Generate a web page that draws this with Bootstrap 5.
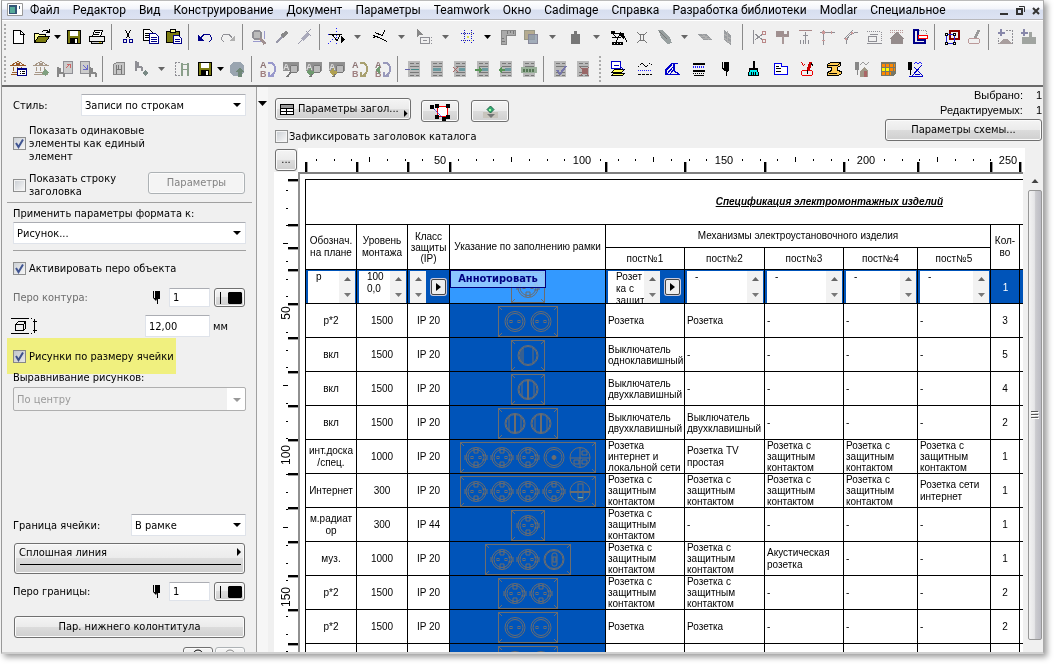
<!DOCTYPE html>
<html lang="ru">
<head>
<meta charset="utf-8">
<meta name="viewport" content="width=device-width, initial-scale=1">
<title>Каталог</title>
<link href="https://cdn.jsdelivr.net/npm/bootstrap@5.3.0/dist/css/bootstrap.min.css" rel="stylesheet">
<style>
:root{--face:#f0f0f0;--ui:"DejaVu Sans Condensed","DejaVu Sans",sans-serif;--sheet:"Liberation Sans",Arial,sans-serif;--blue:#0054b9}
body{background:#fff;font:11px/13px var(--ui);color:#000;height:100vh;overflow:hidden;padding:0 12px 10px 1px}
.app-window{height:100%;background:var(--face);border-top:1px solid #bbb;border-left:1px solid #999;border-right:1px solid #aaa;border-bottom:2px solid #d0d0d0;box-shadow:3px 3px 6px #0006;overflow:hidden}
.menu-strip{height:19px;background:linear-gradient(#fff,#f2f4fa 45%,#d7deef 50%,#dde3f3);border-bottom:1px solid #b8b8bc;gap:13px;padding-left:5px;font:12px/18px Roboto,sans-serif}
.menu-strip a{color:#000;text-decoration:none;white-space:nowrap}
.menu-strip .wbtn{border:0;background:none;padding:0;width:12px;height:12px}
.menu-strip svg,.tools svg{display:block}
.app-icon{margin-right:-7px}
.tools{border-top:1px solid #fff;border-bottom:2px solid #696969;height:67px;overflow:hidden}
.tool-row{height:32px;padding-left:1px}
.tool-row button{border:0;background:none;padding:0;flex:none;display:flex;align-items:center;justify-content:center;height:26px}
.tb{width:23px}.tbw{width:27px}.da{width:9px}.db{width:17px}.dc{width:21px}
.vsep{width:8px;height:26px;flex:none;background:linear-gradient(#8a8a8a,#8a8a8a) 3px 0/1px 100% no-repeat}
.grip{width:4px;height:26px;flex:none;background:repeating-linear-gradient(#aaa 0 2px,transparent 2px 4px) 1px 0/2px 100% no-repeat}
.grip.wide{width:10px;background-position:5px 0}
.side{width:255px;flex:none;padding:7px 10px 0 11px;border-right:1px solid #a0a0a0;overflow:hidden}
.side .win-check + label{margin-left:3px}
.strip{width:11px;flex:none;background:#f6f6f6;padding:14px 1px 0}
.win-select,.win-input{border:1px solid #dfe3ea;border-top-color:#abadb3;border-radius:1px;background-color:#fff;font:inherit;color:#000;height:22px;padding:0 3px}
.win-select{appearance:none;background-image:url("data:image/svg+xml,%3Csvg xmlns='http://www.w3.org/2000/svg' width='8' height='4'%3E%3Cpath d='M0 0h8L4 4z'/%3E%3C/svg%3E");background-repeat:no-repeat;background-position:right 4px center}
.win-select:disabled{height:24px;background-color:#f0f0f0;border:1px solid #afafaf;border-radius:2px;color:#9a9a9a;opacity:1;background-image:url("data:image/svg+xml,%3Csvg xmlns='http://www.w3.org/2000/svg' width='18' height='22'%3E%3Cpath fill='%23fff' d='M0 0h18v22H0z'/%3E%3Cpath fill='%23999' d='M6 10h8l-4 4z'/%3E%3C/svg%3E");background-position:right 0 center}
.win-input{height:19px}
.win-btn{border:1px solid #707070;border-radius:3px;background:linear-gradient(#f4f4f4,#ebebeb 49%,#dcdcdc 50%,#cfcfcf);box-shadow:inset 0 0 0 1px #fbfbfb;font:inherit;color:#000;height:22px;padding:0 8px;line-height:18px;white-space:nowrap}
.win-btn:disabled{border-color:#adb2b5;background:#f4f4f4;color:#838383}
.side .win-btn{margin-right:1px}
.pen-btn{width:31px;height:19px;padding:0;display:flex;align-items:center;justify-content:center}
.win-check{appearance:none;width:13px;height:13px;flex:none;margin:0;border:1px solid #8e8f8f;background:linear-gradient(135deg,#cdd1d6,#f6f6f6) center/9px 9px no-repeat #f4f4f4}
.win-check:checked{background:url("data:image/svg+xml,%3Csvg xmlns='http://www.w3.org/2000/svg' width='11' height='11'%3E%3Cpath fill='none' stroke='%23405592' stroke-width='2' d='M2 5l2.500 4L9 1.500'/%3E%3C/svg%3E") center no-repeat,linear-gradient(135deg,#cdd1d6,#f6f6f6)}
.rule{height:1px;background:#a0a0a0}
.hl{background:#ffff87;mix-blend-mode:multiply;margin:1px 0 0 -6px;height:36px;width:169px;padding-left:6px;position:relative;white-space:nowrap}
.main-pane{min-width:0}
.top-tools{height:61px;padding:0 1px 0 7px}
.counts{font:11px/15px var(--sheet);text-align:right;padding-top:1px}
.ruler-row{height:24px}
.corner{width:30px;padding:1px 0 0 7px}
.corner .win-btn{width:22px;padding:0}
.hr-ruler{background:#fff;overflow:hidden;min-width:0}
.v-ruler{width:24px;margin-left:6px;background:#fff;flex:none;overflow:hidden}
.v-ruler svg,.hr-ruler svg{display:block;font:12px var(--sheet)}
.sheet-box{border-top:2px solid #808080;border-left:2px solid #909090;background:#fff;padding:5px 0 0 5px;overflow:hidden;min-width:0}
.sbar{width:16px;flex:none;margin-left:4px;padding:6px 1px 12px;overflow:hidden}
.thumb{border:1px solid #979797;border-radius:2px;background:linear-gradient(90deg,#f3f3f3,#e6e6e8 45%,#cbcbcf 55%,#bcbcc4);width:14px}
.spec{width:100%;table-layout:fixed;border-collapse:separate;border-spacing:0;font:10px/11px var(--sheet)}
.spec th,.spec td{border-top:1px solid #000;border-left:1px solid #000;padding:0;font-weight:400;vertical-align:middle;overflow:hidden}
.spec tbody td{height:34px;padding-left:2px;white-space:nowrap}
.spec tbody .ctr{text-align:center;padding:0}
.spec .loose,.spec thead th{line-height:12px}
.spec .pic{background:var(--blue);padding:0!important;text-align:center}
.spec .pic svg{display:block;margin:2px auto 0}
.spec .edit td{background:var(--blue);padding:1px 1px 0 2px;height:34px}
.spec .edit .pic{background:#39f;overflow:visible;position:relative}
.spec .edit .last{color:#fff;text-align:center}
.cell-edit{height:32px}
.cell-edit textarea{flex:1 1 0;min-width:0;height:32px;border:0;resize:none;padding:0 0 0 8px;font:10px/12px var(--sheet);overflow:hidden;white-space:pre;background:#fff}
.spin{width:16px;height:32px;flex:none;background:#f2f2f2;display:flex;flex-direction:column;justify-content:space-around;align-items:center}
.go{width:15px;height:16px;padding:0;margin:0 3px 0 5px;flex:none;border:1px solid #444;border-radius:2px;background:#eee;box-shadow:0 0 0 1px #ccd;display:flex;align-items:center;justify-content:center}
.anno{position:absolute;left:0;top:0;width:96px;height:18px;border:1px solid #000080;background:#99ccffdd;color:#000080;font:bold 11px/16px var(--ui);text-align:center}
.doc-title{height:45px;font-weight:700!important;font-style:italic;text-decoration:underline;text-align:right;padding-right:80px!important}
</style>
</head>
<body>
<div class="app-window d-flex flex-column">
<nav class="menu-strip d-flex align-items-center flex-shrink-0">
<svg class="app-icon" width="17" height="14"><path fill="#fff" stroke="#999" d="M.5.5h15v12H.5z"/><path fill="#357" d="M2 2h8v9H2z"/><path fill="#5a9" d="M3 4h5v6H3z"/><path fill="#357" d="M12 3h1v3h-1z"/></svg>
<a href="#">Файл</a><a href="#">Редактор</a><a href="#">Вид</a><a href="#">Конструирование</a><a href="#">Документ</a><a href="#">Параметры</a><a href="#">Teamwork</a><a href="#">Окно</a><a href="#">Cadimage</a><a href="#">Справка</a><a href="#">Разработка библиотеки</a><a href="#">Modlar</a><a href="#">Специальное</a>
<span class="ms-auto d-flex gap-1">
<button class="wbtn" aria-label="Свернуть"><svg width="12" height="12"><path fill="#333" d="M1 9h8v2H1z"/></svg></button>
<button class="wbtn" aria-label="Восстановить"><svg width="12" height="12"><path fill="none" stroke="#333" stroke-width="2" d="M2 5h5v5H2z"/><path fill="none" stroke="#333" d="M4 2.500h5.500V8"/></svg></button>
<button class="wbtn" aria-label="Закрыть"><svg width="12" height="12"><path fill="none" stroke="#333" stroke-width="2" d="M2 4l6 6M8 4l-6 6"/></svg></button></span>
</nav>
<div class="tools flex-shrink-0">
<div class="tool-row d-flex align-items-center" id="row1"></div>
<div class="tool-row d-flex align-items-center" id="row2"></div>
</div>
<div class="d-flex flex-grow-1" style="min-height:0">
<aside class="side d-flex flex-column">
 <div class="d-flex align-items-center flex-shrink-0"><label for="st">Стиль:</label><select id="st" class="win-select ms-auto" style="width:165px"><option>Записи по строкам</option></select></div>
 <div class="d-flex align-items-center mt-2 flex-shrink-0"><input type="checkbox" class="win-check" id="c1" checked><label for="c1">Показать одинаковые<br>элементы как единый<br>элемент</label></div>
 <div class="d-flex align-items-center flex-shrink-0" style="margin-top:9px"><input type="checkbox" class="win-check" id="c2"><label for="c2">Показать строку<br>заголовка</label><button class="win-btn ms-auto align-self-start" style="width:97px" disabled>Параметры</button></div>
 <div class="rule mt-1 flex-shrink-0" style="margin-left:-6px;margin-right:-6px"></div>
 <label for="fmt" class="mt-1">Применить параметры формата к:</label>
 <select id="fmt" class="win-select flex-shrink-0" style="margin-top:2px"><option>Рисунок...</option></select>
 <div class="rule flex-shrink-0" style="margin-top:6px"></div>
 <div class="d-flex align-items-center flex-shrink-0" style="margin-top:11px"><input type="checkbox" class="win-check" id="c3" checked><label for="c3">Активировать перо объекта</label></div>
 <div class="d-flex align-items-center flex-shrink-0" style="margin-top:13px"><label for="p1" style="color:#6d6d6d">Перо контура:</label><svg class="ms-auto me-2" width="8" height="14"><use href="#pen"/></svg><input id="p1" class="win-input" style="width:41px" value="1"><button class="win-btn pen-btn ms-1" aria-label="Перо"><svg width="25" height="13"><use href="#penprev"/></svg></button></div>
 <div class="d-flex align-items-center flex-shrink-0 mt-2"><svg width="28" height="18" style="margin-left:-2px"><g fill="none" stroke="#000" shape-rendering="crispEdges"><path d="M0 1.500h17M0 16.500h17M4.500 7.500h8v6h-8zM7.500 4.500h7v6M12.500 13.500l2-2"/><path d="M4.500 7.500l3-3M12.500 7.500l2-3"/><path stroke-dasharray="1 2" d="M17 1.500h6M17 16.500h6"/><path d="M23.500 2v14M21.500 4.500h4M21.500 13.500h4"/></g></svg><input id="h1" aria-label="Высота" class="win-input ms-auto" style="width:65px;height:22px" value="12,00"><label for="h1" style="width:36px;padding-left:3px">мм</label></div>
 <div class="hl d-flex align-items-center flex-shrink-0"><input type="checkbox" class="win-check" id="c4" checked><label for="c4">Рисунки по размеру ячейки</label></div>
 <label for="al" style="margin-top:-3px">Выравнивание рисунков:</label>
 <select id="al" class="win-select flex-shrink-0" style="margin-top:3px" disabled><option>По центру</option></select>
 <div class="d-flex align-items-center flex-shrink-0" style="margin-top:103px"><label for="br">Граница ячейки:</label><select id="br" class="win-select ms-auto" style="width:115px"><option>В рамке</option></select></div>
 <button class="win-btn flex-shrink-0 text-start d-block position-relative" style="margin:7px 1px 0 1px;height:31px;padding:0 4px 12px;line-height:13px">Сплошная линия<svg class="position-absolute top-0 start-0" width="100%" height="29"><path d="M222 4v8l4-4z"/><path stroke="#000" d="M5 20.500h221"/></svg></button>
 <div class="d-flex align-items-center flex-shrink-0" style="margin-top:8px"><label for="p2">Перо границы:</label><svg class="ms-auto me-2" width="8" height="14"><use href="#pen"/></svg><input id="p2" class="win-input" style="width:41px" value="1"><button class="win-btn pen-btn ms-1" aria-label="Перо границы"><svg width="25" height="13"><use href="#penprev"/></svg></button></div>
 <button class="win-btn flex-shrink-0" style="margin:15px 1px 0 1px">Пар. нижнего колонтитула</button>
 <div class="d-flex justify-content-end flex-shrink-0" style="margin-top:9px;gap:1px"><button class="win-btn d-flex justify-content-center" style="width:30px;padding:0" aria-label="Показать"><svg width="16" height="16"><circle cx="8" cy="7" r="5" fill="none" stroke="#000"/></svg></button><button class="win-btn d-flex justify-content-center" style="width:30px;padding:0" disabled aria-label="Скрыть"><svg width="16" height="16"><circle cx="8" cy="7" r="5" fill="none" stroke="#888"/></svg></button></div>
</aside>
<div class="strip"><svg class="d-block" width="9" height="6"><path d="M0 0h9L4.500 5z"/></svg></div>
<main class="main-pane flex-grow-1 d-flex flex-column">
 <div class="top-tools d-flex justify-content-between flex-shrink-0">
  <div>
   <div class="d-flex align-items-center" style="gap:10px;padding-top:9px">
    <button class="win-btn d-flex align-items-center" style="width:136px;padding:0 2px 0 4px;gap:4px"><svg width="14" height="13" shape-rendering="crispEdges"><path fill="#fff" stroke="#000" d="M.5 1.500h13v10H.5z"/><path fill="#999" d="M1 2h12v3H1z"/><path stroke="#000" d="M1 5.500h12M1 8.500h12M6.500 5v7"/></svg><span>Параметры загол...</span><svg class="ms-auto align-self-end" width="4" height="9"><path d="M0 0v7l3.500-3.500z"/></svg></button>
    <button class="win-btn d-flex align-items-center justify-content-center" style="width:38px;padding:0;margin-top:4px" aria-label="Контур"><svg width="22" height="20"><path fill="#fff" stroke="red" d="M8.500 5.500h10v10h-10z"/><path stroke="#22d" stroke-dasharray="2 1" d="M3 6l12 12"/><path d="M1 4h4v4H1zM6 3h4v4H6zM17 3h4v4h-4zM6 14h4v4H6zM17 14h4v4h-4zM13 16h4v4h-4z"/></svg></button>
    <button class="win-btn d-flex align-items-center justify-content-center" style="width:38px;padding:0;margin-top:4px;margin-left:2px" aria-label="Вставить"><svg width="16" height="16"><path fill="#c8c4bc" d="M1 9h15v6H1z"/><path fill="#777" d="M5 11h8l-4 4z"/><path fill="#3a7" stroke="#264" d="M8.500 3l3.500 3.500-3.500 3.500L5 6.500z"/><path fill="#9f9" d="M7 6h2v2H7z"/></svg></button>
   </div>
   <div class="d-flex align-items-center" style="margin-top:8px"><input type="checkbox" class="win-check" id="c5"><label for="c5" style="margin-left:1px">Зафиксировать заголовок каталога</label></div>
  </div>
  <div class="counts">
   <div>Выбрано: <span class="d-inline-block" style="width:16px">1</span></div>
   <div>Редактируемых: <span class="d-inline-block" style="width:16px">1</span></div>
   <button class="win-btn" style="width:157px;margin-top:1px;font:11px/18px var(--ui)">Параметры схемы...</button>
  </div>
 </div>
 <div class="ruler-row d-flex flex-shrink-0"><div class="corner flex-shrink-0"><button class="win-btn" aria-label="Ещё">...</button></div><div class="hr-ruler flex-grow-1"><svg id="hr" width="100%" height="24"></svg></div><div style="width:18px"></div></div>
 <div class="d-flex flex-grow-1" style="min-height:0">
  <div class="v-ruler"><svg id="vr" width="24" height="100%"></svg></div>
  <div class="sheet-box flex-grow-1">
   <table class="spec">
    <colgroup><col width="51"><col width="51"><col width="42"><col width="156"><col width="79"><col width="80"><col width="79"><col width="74"><col width="73"><col width="29"><col width="4"></colgroup>
    <thead>
     <tr><th colspan="11" class="doc-title">Спецификация электромонтажных изделий</th></tr>
     <tr class="text-center" style="height:23px"><th rowspan="2">Обознач.<br>на плане</th><th rowspan="2">Уровень<br>монтажа</th><th rowspan="2" style="line-height:11px">Класс<br>защиты<br>(IP)</th><th rowspan="2">Указание по заполнению рамки</th><th colspan="5">Механизмы электроустановочного изделия</th><th rowspan="2">Кол-<br>во</th><th rowspan="2"></th></tr>
     <tr class="text-center" style="height:22px"><th>пост№1</th><th>пост№2</th><th>пост№3</th><th>пост№4</th><th>пост№5</th></tr>
    </thead>
    <tbody id="body"></tbody>
   </table>
  </div>
  <div class="sbar d-flex flex-column align-items-center"><svg class="flex-shrink-0" width="8" height="12"><path fill="#444" d="M4 1l3.500 4h-7z"/></svg><div class="thumb flex-grow-1 d-flex align-items-center justify-content-center"><svg width="8" height="9"><path stroke="#555" d="M0 .5h7M0 3.500h7M0 6.500h7"/><path stroke="#fff" d="M1 1.500h7M1 4.500h7M1 7.500h7"/></svg></div></div>
 </div>
</main>
</div>
</div>
<svg width="0" height="0" class="position-absolute"><defs>
<g id="pen"><path d="M0 0h1v7H0zM2 0h5v8H5l-1 2-1-2H2zM4 8h1v5H4z"/><path d="M0 7l3 3v-3z"/></g>
<g id="penprev"><path d="M3 1h1v12H3zM12 1h12l1 1v10l-1 1H12l-1-1V2z"/></g>
</defs></svg>
<script>
const L=(d,c='#000',w=1,x='')=>`<path d="${d}" fill="none" stroke="${c}" stroke-width="${w}" ${x}/>`;
const F=(d,c='#000')=>`<path d="${d}" fill="${c}"/>`;
const P=(d,f,c='#000')=>`<path d="${d}" fill="${f}" stroke="${c}"/>`;
const T=(x,y,s,c,z=9)=>`<text x="${x}" y="${y}" font-size="${z}" font-weight="bold" font-family="Liberation Sans" fill="${c}">${s}</text>`;
const G='#8f8f95';
const chair=(x,y,c=G)=>L(`M${x}.5 ${y}v10M${x+6}.5 ${y+6}v4M${x}.5 ${y+5}.5h6M${x}.5 ${y+1}.5h3M${x+2}.5 ${y+1}v5`,c,2);
const bank=c=>L('M1 5.500L8 1.500l7 4zM3.500 7v4M7.500 7v4M11.500 7v4M2 12.500h12M1 14.500h14',c,1)+F('M6 3h4v2H6z',c);
const mag=c=>F('M1 2h16v9H1z','#909090')+T(1,10,'A','#ddd')+`<circle cx="12" cy="9" r="4" fill="#bbb" stroke="#777"/>`+L('M9 12l-4 5','#777',2)+(c?F('M1 12l5-4v3h3v3H6v3z',c):'');
const ab=c=>T(1,8,'A','#8c7474')+T(1,17,'B','#a08080')+L('M9 2.500h3q5 2 4 9l-3 4M10 12v4h5',c,2);
const doc=x=>F('M3 1h12v16H3z','#b9b9b9')+L('M5 3.500h4M11 3.500h3M5 6.500h9M5 12.500h9M5 15.500h4M11 15.500h3','#777')+x;
const disk=P('M2.500 2.500h13v13h-13z','#7c7c10')+F('M5 3h8v5H5z','#fff')+F('M5 10h8v6H5z')+F('M10 11h2v4h-2z','#fff');
const I={
new:P('M3.500 2.500h7l3 3v10h-10z','#fff')+L('M10.500 2v4h4'),
open:P('M1.500 14.500v-9h4l1 1h6v2','#ff9')+P('M1.500 14.500l4-6h11l-4 6z','#7c7c10')+L('M9 4l2-2h3l2 3M13 4h3V1'),
save:disk,
print:P('M4.500 8.500l2-6h8l-2 6z','#fff')+P('M1.500 8.500h15v5h-15z','#eee')+P('M3.500 13.500h11v2h-11z','#ccc')+L('M7 4.500h5M6 6.500h5')+F('M11 14h2v1h-2z','#cc0'),
cut:L('M6.500 2l4 8M11.500 2l-4 8')+`<g fill="none" stroke="#008"><circle cx="6" cy="13" r="2"/><circle cx="12" cy="13" r="2"/></g>`,
copy:P('M1.500 1.500h6l3 3v8h-9z','#fff')+L('M3 5.500h4M3 7.500h5M3 9.500h5')+P('M7.500 5.500h6l3 3v7h-9z','#fff','#008')+L('M9 9.500h6M9 11.500h6M9 13.500h6','#008'),
paste:P('M1.500 3.500h13v11h-13z','#7c7c10')+P('M5.500 1.500h5v3h-5z','#ff9')+P('M8.500 7.500h5l3 3v5h-8z','#fff','#008')+L('M10 11.500h5M10 13.500h5','#008'),
undo:L('M5 10q2-4 6-4 5 0 4 6l-2 2','#008')+F('M2 7v6h6z','#008'),
redo:L('M13 10q-2-4-6-4-5 0-4 6l2 2',G)+F('M16 7v6h-6z','#b0b0b0'),
find:`<circle cx="7" cy="7" r="4.500" fill="#bbb" stroke="${G}" stroke-width="2"/>`+L('M10 10l5 6','#a09090',3)+L('M3 13.500h8M14.500 3v8','#99c'),
drop:L('M3 15l7-7','#99a',2)+L('M9 6l3 3M11 7l3-3','#888',4),
syr:L('M2 16l4-4M12 4l3-3M10 3l5 5','#99a')+L('M6 12l6-6','#aab',3),
guide:L('M1 6.500h15M9.500 0v18M1 16L16 1','#22f',1,'stroke-dasharray="1 2"')+L('M2 6.500h13M5 6l5 7 3-6')+F('M14 8l4 4-2 1-2 2z'),
slash:L('M4 4.500l7 3 3-5M2 7.500l6 2 8 4M2 10l4-2'),
tag:F('M2 1v8l2-2 4 0z','#888')+L('M5.500 9.500h9v6h-9zM8 12.500h4',G,1)+L('M16.500 9v7',G,1,'stroke-dasharray="1 2"'),
grid:L('M5.500 2v14M12.500 2v14M2 5.500h14M2 12.500h14','#11c',1,'stroke-dasharray="1 1"')+F('M8 8h2v2H8zM5 5h1v1H5zM12 5h1v1h-1zM5 12h1v1H5zM12 12h1v1h-1z','#dd5'),
rule:P('M2.500 2.500h14v5h-9v9h-5z','#aaa','#888')+L('M8.500 3v3M11.500 3v2M14.500 3v3M3 10.500h2M3 13.500h3','#777'),
layer:P('M2.500 2.500h10v9h-10z','#b5ab90','#998')+P('M6.500 6.500h9v9h-9z','#8f9cadcc','#889'),
weight:F('M8 3h3v3h3v10H5V6h3z','#777'),
net:L('M2 5.500h7l5 5M2 5l5 5 8-2M2 9.500h8M11 4l-5 10M13 6l4 8')+F('M1 3h4v3H1zM11 5h3v3h-3z')+L('M2 14.500h11M2 16.500h11')+L('M2 15.500h11','#000',1,'stroke-dasharray="2 1"'),
cross:L('M4 4.500l3 2h4l3-2M4 14.500l3-2h4l3 2M7.500 6v7M10.500 6v7','#777'),
trowel:F('M2 2l4 0 8 7 2 6-4 1-6-5z','#98a0a0')+L('M3 3l8 8','#777'),
para:F('M1 6h9l7 6H8z','#9a9da0')+L('M4 8.500h8M6 10.500h9M6 6l7 6','#b0b0b0'),
para2:F('M5 2l7 5v10l-7-5z','#9a9da0')+L('M5 6l7 5M5 10l7 5M8.500 3v12','#b0b0b0'),
trim:L('M3.500 2v14M5 6l8 6M5 12l8-6',G)+`<g fill="none" stroke="#b88"><circle cx="14" cy="5" r="2"/><circle cx="14" cy="13" r="2"/></g>`,
hammer:F('M3 3h8v3h3V3h2v6H3z','#a09090')+L('M10 8v8','#a99',2),
ext:L('M3 2.500h13','#a88')+L('M9.500 4v12M7 7.500h5M4.500 12v4M7.500 12v4M12.500 12v4',G),
corner:L('M1 4.500h15M4.500 2v15',G)+F('M3 3h3v3H3z','#c99')+F('M12 3h1v3h-1zM3 12h3v1H3z','#c99'),
curve:L('M4.500 16q0-11 12-12M2 11L11 2',G)+F('M3 10h2v2H3zM9 4h2v2H9z','#c99'),
resize:L('M2 3.500h14M16.500 4v10',G,1,'stroke-dasharray="1 1"')+L('M3.500 8.500h8v5h-8zM2 15.500h15M5 6.500h8',G),
house:L('M2 2.500h14M2 4.500h14','#b99',1,'stroke-dasharray="1 1"')+F('M9 4l8 7h-2v5H3v-5H1z','#958c8c'),
lshape:L('M3 2h4v10h7v3H3z','#008',2)+L('M8 2.500h7.500v5',G,1,'stroke-dasharray="1 1"')+P('M7.500 7.500h9v3h-9z','#fff','red'),
trans:L('M7.500 2.500h9v8h-9z','#800',2)+L('M4.500 6.500h8v9h-8z','#22d')+`<g fill="#fff" stroke="#000"><path d="M3.500 5.500h2v2h-2zM11.500 5.500h2v2h-2zM3.500 14.500h2v2h-2zM11.500 14.500h2v2h-2z"/></g>`,
lamp:L('M10 10l4-8','#999',3)+`<ellipse cx="9" cy="13" rx="6" ry="3" fill="none" stroke="#b99"/>`,
addsite:L('M5 1v7M2 4.500h7','#88a',2)+L('M10 2.500h6.500v13H2v-6',G,1,'stroke-dasharray="2 1"')+F('M3 16l4-5h5l4 5z','#a89e9e'),
addblk:L('M5 1v7M2 4.500h7','#88a',2)+F('M3 9h7V4h3v5h4v7H3z','#a0a4a0'),
bank1:bank('#9a5a28')+P('M7.500 8.500h9v7h-9z','#fff','#008')+L('M8 9.500h8','#008')+L('M10 11.500h1M12 11.500h3M10 13.500h1M12 13.500h3','#000'),
bank2:bank('#a89888')+F('M12 9l4 3-3 4-4-2z','#80a080'),
dch:P('M7.500 1.500h9v12h-9z','#ccc',G)+chair(1,7,'#888')+L('M10 8l4-4M11 4.500h3v3','#c66'),
dch2:P('M1.500 1.500h9v12h-9z','#ccc',G)+chair(10,7,'#888')+L('M4 5l4 4M8.500 5v4H4','#66c'),
box1:P('M3.500 4.500l3-2h8v12h-11z','#c5c5c5','#888')+L('M6.500 5v9M11.500 5v9M6 9.500h6M8.500 5v4','#777'),
plane:chair(2,1)+F('M12 10l3 3-3 3-3-3z','#7a8a85'),
chair2:L('M2 2.500h6M2.500 2v13h6',G,1,'stroke-dasharray="2 1"')+L('M9 3v13M15 3v13M9 4.500h7M9 9.500h7','#8a9f8a',1.5),
globe:`<circle cx="9" cy="9" r="7.500" fill="#9aa5b0"/>`+F('M12 7l4 5h-2v5h-4v-5H8z','#708878'),
ab0:ab('#99c'),m0:mag(),m1:mag('#709a70'),m2:mag('#b0a050'),ab1:ab('#a8a070'),ab2:ab('#99b')+F('M1 10l5-4v8z','#709a70'),
d0:doc(F('M0 9h5v1H0z','#66a')+L('M6 9.500h8','#488')),d1:doc(F('M5 8h8v3H5z','#6a9aa0')),d2:doc(F('M8 8h6v3H8z','#6a9aa0')+L('M2 7l5 5M7 7l-5 5','#a66')),d3:doc(F('M8 8h6v3H8z','#6a9aa0')+F('M1 9h4V6l3 4-3 4v-3H1z','#579457')),d4:doc(F('M8 8h6v3H8z','#6a9aa0')+F('M8 9H5V6l-4 4 4 4v-3h3z','#579457')),d5:doc(F('M1 7h16v6H1z','#9ab09a')+L('M3 10h12','#575',3,'stroke-dasharray="2 1"')),
d6:doc(L('M6 10l3 4 6-8','#77a',2)),d7:doc(F('M8 8h6v6H8z','#966')+L('M6 7l9 9M15 7l-9 9','#966')),
story:P('M2.500 1.500h9v7h-9z','#fff','#00c')+P('M2.500 12.500l3-3h10l-3 3z','#ff5','#000')+P('M2.500 15.500l2-2h11l-2 2z','#ff5','#000')+L('M5 5.500h5M12 7l3 3','#00c'),
waves:L('M2 7l4-4 4 4 4-4 3 3','#000',1,'stroke-dasharray="2 1"')+L('M2 10.500h14','#22f',1,'stroke-dasharray="1 1"')+L('M2 14.500h14','#000',1,'stroke-dasharray="3 1"'),
hatch:L('M15 3.500H9l-6 6v5h13l-5-4V4','#00c',1.5)+L('M4 14l7-8M7 14l4-5M3 11l6-6','#00c'),
lines:L('M3 3.500h12M3 10.500h12','#000',2)+L('M3 6.500h12','#22f',2,'stroke-dasharray="1 1"')+L('M3 13.500h12','#000',1,'stroke-dasharray="1 1"')+L('M4 15.500h10'),
pen2:F('M5 2h1v7H5zM7 2h5v8l-2 2v4H9v-4l-2-2z')+F('M5 8l3 4v-4z'),
brush:F('M9 1h2v7H9z')+P('M5.500 8.500h8l1 7h-10z','#0ee')+L('M5 9.500h9M7.500 12v3M9.500 12v3M11.500 12v3'),
zone:P('M3.500 3.500h7v3h6v8h-13z','#fff','#00e')+L('M5 6.500h3M5 8.500h5M5 11.500h5','#000'),
mark:L('M3 2l3 4 3-4','#d00',1,'stroke-dasharray="1 1"')+L('M13 2l-3 8','#c00',3)+`<ellipse cx="9" cy="13" rx="6" ry="3" fill="none" stroke="#e00"/>`+L('M9.500 10v4M13 3l2 3'),
beam:P('M2.500 4.500l3-2h10v3l-3 2v3l4 1v2l-3 2h-11v-3l4-2v-3h-4z','#fc5')+L('M3 5.500h9l3-2M4 13.500h8'),
pgray:F('M3 2h4v8H6v5H5v-5H3z','#888')+L('M8 5l3-3 3 3 3-3','#999')+F('M8 11l4-4 4 4v6H8z','#a09888')+F('M12 11h3v6h-3z','#a66'),
cal:F('M2 2h15v11l-3 3H2z','#776')+L('M3 5.500h13M3 9.500h13M3 13.500h9','#f80',3,'stroke-dasharray="3 1"')+L('M3 9.500h7','#ff0',3,'stroke-dasharray="3 1"'),
pfin:F('M2 2h4v8H5v5H4v-5H2z')+L('M8 4l2-2 2 2 2-2 2 2','#22f')+L('M6 16L16 5M8 7l9 9M3 16.500h14M9 14h5','#00c')
};
const tri=c=>`<svg width="7" height="4"><path d="M0 0h7L3.500 4z" fill="${c}"/></svg>`;
function bar(id,s){document.getElementById(id).innerHTML=s.split(' ').map(k=>{
 if(k==='|')return '<span class="vsep"></span>';
 if(k===':')return '<span class="grip"></span>';
 if(k==='::')return '<span class="grip wide"></span>';
 let m=k.match(/^(da|db|dc)(!?)$/);
 if(m)return `<button class="${m[1]}" aria-label="Список">${tri(m[2]?'#000':'#666')}</button>`;
 let w='tb';if(k[0]==='>'){w='tbw';k=k.slice(1)}
 return `<button class="${w}" aria-label="${k}"><svg width="18" height="18" shape-rendering="crispEdges">${I[k]}</svg></button>`}).join('')}
bar('row1',': new open da! save print | cut copy paste | undo redo | find drop syr | guide dc slash dc tag dc grid db! rule layer dc weight dc net cross trowel db para para2 | trim hammer ext corner curve resize house lshape | trans lamp | addsite addblk');
bar('row2',': bank1 bank2 dch dch2 | box1 plane db chair2 save da! globe | ab0 m0 m1 m2 ab1 ab2 | d0 d1 d2 d3 d4 d5 | d6 d7 :: >story >waves >hatch >lines >pen2 >brush >zone >mark >beam >pgray >cal >pfin');

/* wiring devices drawn inside a frame: p plain socket, g earthed socket, s/d switches, t TV, n/m network, a audio */
function device(t,x){
 const y=15.5,c='#6d6d6d';let r=`<circle cx="${x}" cy="${y}" r="10"/>`;
 const holes=`<rect x="${x-5}" y="${y-1}" width="2" height="2"/><rect x="${x+3}" y="${y-1}" width="2" height="2"/>`;
 if(t==='p')r+=`<circle cx="${x}" cy="${y}" r="8"/>`+holes;
 if(t==='g')r+=`<circle cx="${x}" cy="${y}" r="8"/>`+holes+`<path d="M${x-2} 6v5h4V6M${x-2} 25v-5h4v5M${x-11} 13v5M${x+11} 13v5M${x+6} 13h4M${x+6} 18h4"/>`;
 if(t==='s')r+=`<circle cx="${x}" cy="${y}" r="9"/><path d="M${x-5} 8v15M${x+5} 8v15M${x-7} 9v13"/>`;
 if(t==='d')r+=`<circle cx="${x}" cy="${y}" r="9"/><path stroke-width="2" d="M${x} 6v19"/><path d="M${x-6} 9v13M${x+6} 9v13"/>`;
 if(t==='t')r+=`<circle cx="${x}" cy="${y}" r="8"/><circle cx="${x}" cy="${y}" r="2" fill="${c}"/>`;
 if(t==='n')r+=`<path d="M${x-10} 16h20M${x} 6v20M${x+2} 9h5v4h-5zM${x-6} 18h5v4h-5zM${x+2} 18h5v4h-5z"/>`;
 if(t==='m')r+=`<path stroke-width="2" d="M${x-10} 16h20"/><rect x="${x-2}" y="8" width="5" height="15"/><path stroke="#6aa" d="M${x-2} 21.500h5"/>`;
 if(t==='a')r+=`<circle cx="${x}" cy="${y}" r="9"/><rect x="${x-2}" y="9" width="5" height="13" rx="2"/><rect x="${x-1}" y="13" width="3" height="5"/>`;
 return r}
function frame(s){const w={1:34,2:60,3:86,5:136}[s.length],p=26,x0=w/2-(s.length-1)*p/2;
 return `<svg width="${w}" height="31" fill="none" stroke="#6d6d6d"><rect x=".5" y=".5" width="${w-1}" height="30"/><path d="M1 1l3 3M${w-1} 1l-3 3M1 30l3-3M${w-1} 30l-3-3"/>${[...s].map((t,i)=>device(t,x0+i*p)).join('')}</svg>`}
const spin='<span class="spin"><svg width="7" height="4"><path d="M3.500 0L7 4H0z" fill="#666"/></svg><svg width="7" height="4"><path d="M0 0h7L3.500 4z" fill="#777"/></svg></span>';
const go='<button class="go" aria-label="Выбрать"><svg width="5" height="8"><path d="M0 0l5 4-5 4z"/></svg></button>';
const ed=(v,x='')=>`<td><div class="cell-edit d-flex align-items-center"><textarea aria-label="Значение">${v}</textarea>${spin}${x}</div></td>`;
let h=`<tr class="edit">${ed('р')}${ed('100\n0,0')}<td><div class="cell-edit d-flex align-items-center">${spin}${go}</div></td><td class="pic">${frame('g')}<div class="anno">Аннотировать</div></td>${ed('Розет\nка с\nзащит',go)}${ed('-').repeat(4)}<td class="last">1</td><td></td></tr>`;
const R='Розетка',K='Розетка с|защитным|контактом',V='Выключатель|двухклавишный';
[['р*2',1500,'IP 20','pp',R,R,'-','-','-',3],
['вкл',1500,'IP 20','s','Выключатель|одноклавишный','-','-','-','-',5],
['вкл',1500,'IP 20','d',V,'-','-','-','-',4],
['вкл',1500,'IP 20','dd',V,V,'-','-','-',2],
['инт.доска|/спец.',1000,'IP 20','gggtn','Розетка|интернет и|локальной сети','Розетка TV|простая',K,K,K,1],
['Интернет',300,'IP 20','ggggm',K,K,K,K,'Розетка сети|интернет',1],
['м.радиат|ор',300,'IP 44','g',K,'-','-','-','-',1],
['муз.',1000,'IP 20','gga',K,K,'Акустическая|розетка','-','-',1],
['р*2',1500,'IP 20','gg',K,K,'-','-','-',2],
['р*2',1500,'IP 20','pp',R,R,'-','-','-',2],
['','','','pp','','','','','','']].forEach(r=>{
 h+='<tr>'+r.map((v,i)=>{v=String(v);if(i===3)return `<td class="pic">${frame(v)}</td>`;
 const loose=/TV|сети\|инт|Акуст|доска|радиат/.test(v)?' loose':'';
 return `<td class="${i<3||i===9?'ctr':''}${loose}">${v.replace(/\|/g,'<br>')}</td>`}).join('')+'<td></td></tr>'});
document.getElementById('body').innerHTML=h;

/* rulers: a tick every 17.75 px, a long one at the half, a number every eighth; bars mark the table's grid lines */
const hr=document.getElementById('hr'),vr=document.getElementById('vr');
function rulers(){
 const W=hr.parentNode.clientWidth,H=vr.parentNode.clientHeight;let a='',b='';
 for(let k=1;k*17.75<Math.max(W,H);k++){const p=Math.round(k*17.75),m=k%4===0;
  if(k%8===0){
   if(p<W-12)a+=`<text x="${p}" y="16" text-anchor="middle" font-size="11">${k/8*50}</text>`;
   if(p<H-16)b+=`<text transform="translate(16 ${p-1}) rotate(-90)" text-anchor="middle">${k/8*50}</text>`}
  else{if(p<W)a+=`<rect x="${p}" y="${m?9:11}" width="1" height="${m?5:2}"/>`;if(p<H)b+=`<rect x="${m?9:12}" y="${p}" width="${m?5:2}" height="1"/>`}}
 const x0=hr.getBoundingClientRect().left,y0=vr.getBoundingClientRect().top,xs=new Set(),ys=new Set();
 document.querySelectorAll('.spec th,.spec td').forEach(c=>{const r=c.getBoundingClientRect();xs.add(Math.round(r.left-x0));ys.add(Math.round(r.top-y0))});
 xs.forEach(x=>a+=`<rect x="${x}" y="14" width="2" height="10"/><rect x="${x+2}" y="14" width="1" height="10" fill="#999"/>`);
 ys.forEach(y=>{if(y<H)b+=`<rect x="14" y="${y}" width="10" height="2"/><rect x="14" y="${y+2}" width="10" height="1" fill="#999"/>`});
 hr.innerHTML=a;vr.innerHTML=b}
rulers();addEventListener('load',rulers);addEventListener('resize',rulers);
</script>
<script src="https://cdn.jsdelivr.net/npm/bootstrap@5.3.0/dist/js/bootstrap.bundle.min.js"></script>
</body>
</html>
